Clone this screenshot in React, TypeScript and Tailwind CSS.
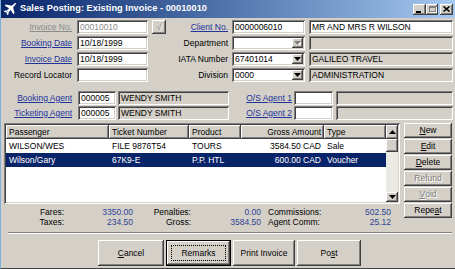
import React from "react";

const raised =
  "shadow-[inset_-1px_-1px_#404040,inset_1px_1px_#ffffff,inset_-2px_-2px_#808080,inset_2px_2px_#d4d0c8]";
const sunken =
  "shadow-[inset_1px_1px_#808080,inset_-1px_-1px_#ffffff,inset_2px_2px_#404040,inset_-2px_-2px_#d4d0c8]";
const grayText = "text-[#808080] [text-shadow:1px_1px_0_#ffffff]";
const linkText = "text-[#22339a] underline";

function DownArrow({ off }: { off?: boolean }) {
  return (
    <svg width="7" height="4" viewBox="0 0 7 4">
      {off && <path d="M1 1h7L4.5 5z" fill="#ffffff" />}
      <path d="M0 0h7L3.5 4z" fill={off ? "#808080" : "#000000"} />
    </svg>
  );
}

function UpArrow() {
  return (
    <svg width="7" height="4" viewBox="0 0 7 4">
      <path d="M0 4h7L3.5 0z" fill="#000000" />
    </svg>
  );
}

function Field({
  className,
  value,
  gray,
  dim,
  combo,
  comboOff,
}: {
  className: string;
  value?: string;
  gray?: boolean;
  dim?: boolean;
  combo?: boolean;
  comboOff?: boolean;
}) {
  return (
    <div
      className={`${sunken} ${className} h-full flex items-center pl-[3px] pr-[2px] whitespace-nowrap overflow-hidden ${
        gray ? "bg-[#d4d0c8]" : "bg-white"
      } ${dim ? "text-[#8c8c8c]" : "text-black"}`}
    >
      <span>{value}</span>
      {combo && (
        <div
          className={`${raised} ml-auto w-[11px] h-[10px] bg-[#d4d0c8] flex items-center justify-center`}
        >
          <DownArrow off={comboOff} />
        </div>
      )}
    </div>
  );
}

function SideButton({ label, u, rest, off }: { label: string; u: string; rest: string; off?: boolean }) {
  return (
    <div
      className={`${raised} h-[15px] bg-[#d4d0c8] flex items-center justify-center ${off ? grayText : "text-black"}`}
    >
      {label}
      <span className="underline">{u}</span>
      {rest}
    </div>
  );
}

export default function App() {
  return (
    <div className="w-[455px] h-[269px] bg-[#d4d0c8] flex flex-col overflow-hidden border-l border-l-[#7fb0dc] border-b border-b-[#404040] font-['Liberation_Sans',Arial,sans-serif] text-[8.5px] leading-none text-black">
      {/* title bar */}
      <div className="h-[18px] shrink-0 flex items-center bg-gradient-to-r from-[#0a246a] to-[#a6caf0] pl-[2px] pr-[2px]">
        <svg width="14" height="14" viewBox="0 0 16 16" className="mr-[3px]">
          <path
            d="M14 1.2c.7-.4 1.3.2.9.9L11.6 6.4l1.6 6.2-1.4 1.4-2.9-5L6.4 11.6v2.2L5 15.2l-1.1-3.1L.8 11l1.4-1.4h2.2L7 7.1 2 4.2l1.4-1.4 6.2 1.6z"
            fill="#ffffff"
          />
          <path d="M3 13l3-3" stroke="#6fa8dc" strokeWidth="1" />
        </svg>
        <span className="text-white font-bold text-[9.2px] tracking-[0.05px]">
          Sales Posting: Existing Invoice - 00010010
        </span>
        <div className="ml-auto flex items-center">
          <div className={`${raised} w-[13px] h-[11px] bg-[#d4d0c8] flex items-end justify-center pb-[2px]`}>
            <div className="w-[5px] h-[2px] bg-black -translate-x-[1px]" />
          </div>
          <div className={`${raised} w-[12px] h-[11px] bg-[#d4d0c8] flex items-center justify-center`}>
            <div className="w-[7px] h-[6px] border border-[#808080] border-t-2 shadow-[1px_1px_0_#ffffff]" />
          </div>
          <div className={`${raised} ml-[2px] w-[13px] h-[11px] bg-[#d4d0c8] flex items-center justify-center`}>
            <svg width="7" height="6" viewBox="0 0 7 6">
              <path d="M0.5 0.5l6 5M6.5 0.5l-6 5" stroke="#000000" strokeWidth="1.6" />
            </svg>
          </div>
        </div>
      </div>

      {/* header fields */}
      <div className="flex flex-col gap-[2px] pt-[2px]">
        <div className="flex h-[14px] items-center">
          <div className="w-[76px] pr-[5px] text-right">
            <span className="text-[#8a8a8a] underline">Invoice No.</span>
          </div>
          <Field className="w-[71px]" value="00010010" dim />
          <div className="w-[18px] h-full flex justify-end">
            <div className={`${raised} w-[14px] h-full bg-[#d4d0c8] flex items-center justify-center ${grayText}`}>
              √
            </div>
          </div>
          <div className="w-[66px] pr-[4px] text-right">
            <span className={linkText}>Client No.</span>
          </div>
          <Field className="w-[73px]" value="0000006010" />
          <Field className="ml-[4px] w-[144px]" value="MR AND MRS R WILSON" />
        </div>

        <div className="flex h-[14px] items-center">
          <div className="w-[76px] pr-[5px] text-right">
            <span className={linkText}>Booking Date</span>
          </div>
          <Field className="w-[71px]" value="10/18/1999" />
          <div className="w-[18px]" />
          <div className="w-[66px] pr-[4px] text-right">Department</div>
          <Field className="w-[73px]" value="" combo comboOff />
          <Field className="ml-[4px] w-[144px]" value="" gray />
        </div>

        <div className="flex h-[14px] items-center">
          <div className="w-[76px] pr-[5px] text-right">
            <span className={linkText}>Invoice Date</span>
          </div>
          <Field className="w-[71px]" value="10/18/1999" />
          <div className="w-[18px]" />
          <div className="w-[66px] pr-[4px] text-right">IATA Number</div>
          <Field className="w-[73px]" value="67401014" combo />
          <Field className="ml-[4px] w-[144px]" value="GALILEO TRAVEL" gray />
        </div>

        <div className="flex h-[14px] items-center">
          <div className="w-[76px] pr-[5px] text-right">Record Locator</div>
          <Field className="w-[71px]" value="" />
          <div className="w-[18px]" />
          <div className="w-[66px] pr-[4px] text-right">Division</div>
          <Field className="w-[73px]" value="0000" combo />
          <Field className="ml-[4px] w-[144px]" value="ADMINISTRATION" gray />
        </div>
      </div>

      {/* agents */}
      <div className="flex flex-col gap-[1px] mt-[9px]">
        <div className="flex h-[14px] items-center">
          <div className="w-[77px] pr-[6px] text-right">
            <span className={linkText}>Booking Agent</span>
          </div>
          <Field className="w-[38px]" value="000005" />
          <Field className="ml-[2px] w-[111px]" value="WENDY SMITH" gray />
          <div className="w-[65px] pr-[2px] text-right">
            <span className={linkText}>O/S Agent 1</span>
          </div>
          <Field className="w-[39px]" value="" />
          <Field className="ml-[3px] w-[117px]" value="" gray />
        </div>
        <div className="flex h-[14px] items-center">
          <div className="w-[77px] pr-[6px] text-right">
            <span className={linkText}>Ticketing Agent</span>
          </div>
          <Field className="w-[38px]" value="000005" />
          <Field className="ml-[2px] w-[111px]" value="WENDY SMITH" gray />
          <div className="w-[65px] pr-[2px] text-right">
            <span className={linkText}>O/S Agent 2</span>
          </div>
          <Field className="w-[39px]" value="" />
          <Field className="ml-[3px] w-[117px]" value="" gray />
        </div>
      </div>

      {/* list + side buttons */}
      <div className="flex mt-[3px]">
        <div className="ml-[3px] w-[396px] flex flex-col">
          <div className={`${sunken} h-[81px] bg-white p-[2px] flex`}>
            <div className="w-[380px] flex flex-col">
              <div className="flex h-[14px] shrink-0">
                <div className={`${raised} w-[103px] bg-[#d4d0c8] flex items-center px-[3px]`}>Passenger</div>
                <div className={`${raised} w-[80px] bg-[#d4d0c8] flex items-center px-[3px]`}>Ticket Number</div>
                <div className={`${raised} w-[52px] bg-[#d4d0c8] flex items-center px-[3px]`}>Product</div>
                <div className={`${raised} w-[83px] bg-[#d4d0c8] flex items-center justify-end px-[3px]`}>
                  Gross Amount
                </div>
                <div className={`${raised} w-[62px] bg-[#d4d0c8] flex items-center px-[3px]`}>Type</div>
              </div>
              <div className="flex h-[14px] items-center">
                <div className="w-[103px] px-[3px]">WILSON/WES</div>
                <div className="w-[80px] px-[3px]">FILE 9876T54</div>
                <div className="w-[52px] px-[3px]">TOURS</div>
                <div className="w-[83px] px-[3px] text-right">3584.50 CAD</div>
                <div className="w-[62px] px-[3px]">Sale</div>
              </div>
              <div className="flex h-[14px] items-center bg-[#0a246a] text-white">
                <div className="w-[103px] px-[3px]">Wilson/Gary</div>
                <div className="w-[80px] px-[3px]">67K9-E</div>
                <div className="w-[52px] px-[3px]">P.P. HTL</div>
                <div className="w-[83px] px-[3px] text-right">600.00 CAD</div>
                <div className="w-[62px] px-[3px]">Voucher</div>
              </div>
            </div>
            <div className="w-[12px] flex flex-col bg-[#ebe9e4]">
              <div className={`${raised} h-[14px] bg-[#d4d0c8] flex items-center justify-center`}>
                <UpArrow />
              </div>
              <div className={`${raised} h-[13px] bg-[#d4d0c8]`} />
              <div className={`${raised} mt-auto h-[10px] bg-[#d4d0c8] flex items-center justify-center`}>
                <DownArrow />
              </div>
            </div>
          </div>

          {/* totals */}
          <div className="mt-[3px] flex flex-col">
            <div className="flex h-[10px] items-center">
              <div className="w-[60px] text-right">Fares:</div>
              <div className="w-[69px] text-right text-[#2c4394]">3350.00</div>
              <div className="w-[58px] text-right">Penalties:</div>
              <div className="w-[70px] text-right text-[#2c4394]">0.00</div>
              <div className="w-[7px]" />
              <div className="w-[75px]">Commissions:</div>
              <div className="w-[48px] text-right text-[#2c4394]">502.50</div>
            </div>
            <div className="flex h-[10px] items-center">
              <div className="w-[60px] text-right">Taxes:</div>
              <div className="w-[69px] text-right text-[#2c4394]">234.50</div>
              <div className="w-[58px] text-right">Gross:</div>
              <div className="w-[70px] text-right text-[#2c4394]">3584.50</div>
              <div className="w-[7px]" />
              <div className="w-[75px]">Agent Comm:</div>
              <div className="w-[48px] text-right text-[#2c4394]">25.12</div>
            </div>
          </div>
        </div>

        <div className="ml-[4px] w-[48px] flex flex-col gap-[1px]">
          <SideButton label="" u="N" rest="ew" />
          <SideButton label="" u="E" rest="dit" />
          <SideButton label="" u="D" rest="elete" />
          <SideButton label="Refund" u="" rest="" off />
          <SideButton label="" u="V" rest="oid" off />
          <SideButton label="Repe" u="a" rest="t" />
        </div>
      </div>

      {/* separator */}
      <div className="mt-[5px] ml-[7px] mr-[3px] h-[2px] border-t border-t-[#808080] border-b border-b-white" />

      {/* bottom buttons */}
      <div className="mt-[6px] flex gap-[2px] pl-[97px]">
        <div className={`${raised} w-[66px] h-[26px] bg-[#d4d0c8] flex items-center justify-center`}>
          <span className="underline">C</span>ancel
        </div>
        <div
          className={`${raised} relative w-[65px] h-[26px] bg-[#d4d0c8] border border-black flex items-center justify-center`}
        >
          Remarks
          <span className="absolute inset-[4px] border border-dotted border-black" />
        </div>
        <div className={`${raised} w-[62px] h-[26px] bg-[#d4d0c8] flex items-center justify-center`}>
          Print Invoice
        </div>
        <div className={`${raised} w-[64px] h-[26px] bg-[#d4d0c8] flex items-center justify-center`}>
          Po<span className="underline">s</span>t
        </div>
      </div>
    </div>
  );
}
